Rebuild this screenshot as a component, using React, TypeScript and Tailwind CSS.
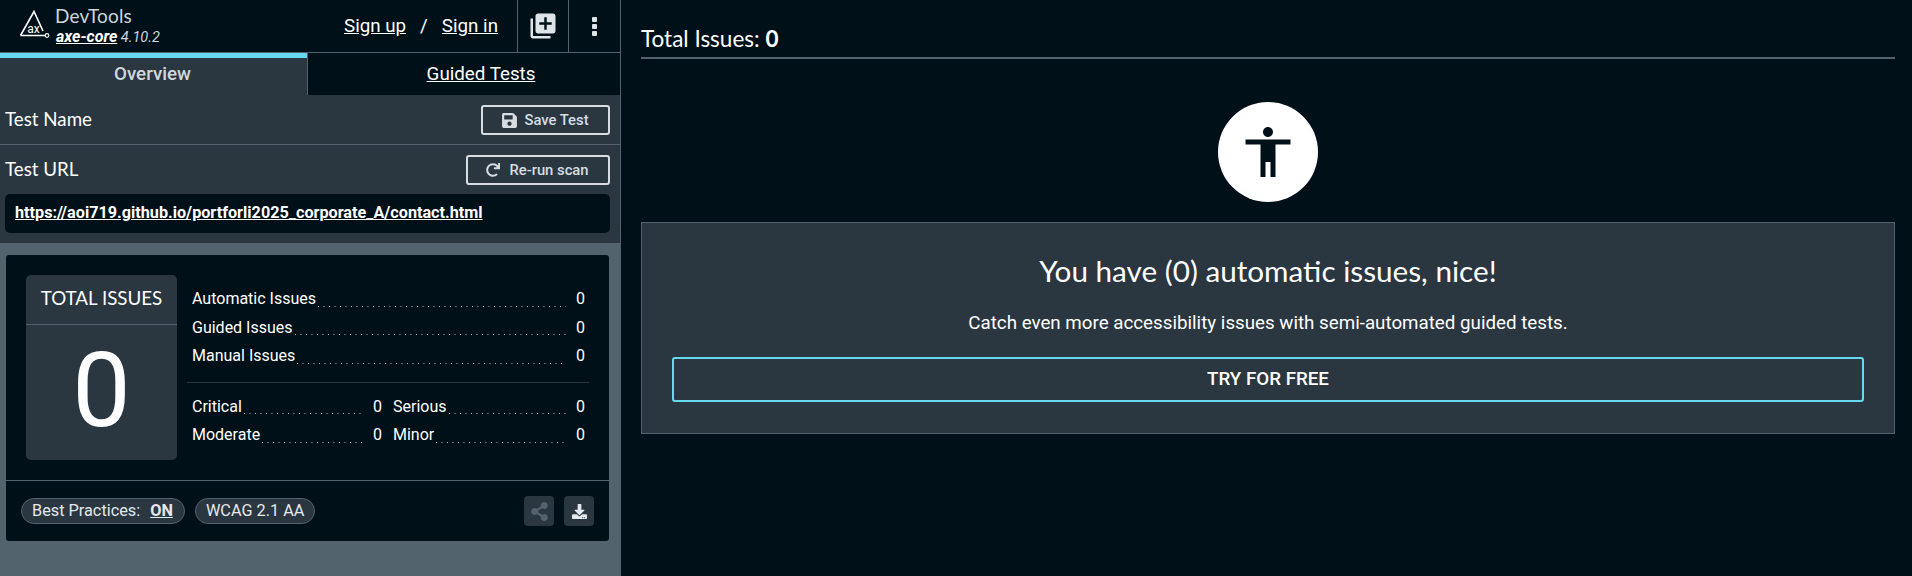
import React from 'react';
import { FaSave, FaShareAlt, FaDownload, FaRedo } from 'react-icons/fa';
import { MdLibraryAdd, MdAccessibility } from 'react-icons/md';

const AxeLogo = () => (
  <svg width="32" height="30" viewBox="0 0 32 30" className="shrink-0">
    <path d="M1.5 26.5 L15 2.5 L24 22 M1.5 26.5 H26" fill="none" stroke="#fff" strokeWidth="1.6" />
    <circle cx="28" cy="26.5" r="1.8" fill="none" stroke="#fff" strokeWidth="1.2" />
    <text x="14.5" y="23.5" textAnchor="middle" fontSize="12" fill="#fff" fontFamily="Roboto, sans-serif">ax</text>
  </svg>
);

const Dots = () => (
  <span className="flex-1 ml-[2px] mb-[7px] h-px self-end bg-[linear-gradient(to_right,#c3ccd2_1px,transparent_1px)] bg-[length:5.5px_1px] bg-repeat-x" />
);

const CountRow = ({ label, className = '' }: { label: string; className?: string }) => (
  <div className={`flex items-center h-[28.5px] ${className}`}>
    <span>{label}</span>
    <Dots />
    <span className="w-[8px] ml-[10px] shrink-0">0</span>
  </div>
);

const OutlineButton = ({ icon, label, width, gap }: { icon: React.ReactNode; label: string; width: string; gap: string }) => (
  <button className={`${width} ${gap} h-[30px] flex items-center justify-center pt-px pr-px rounded-[3px] border-2 border-[#d7dde2] text-[#d7dde2] text-[14.8px] font-medium font-['Roboto',sans-serif]`}>
    {icon}
    {label}
  </button>
);

export default function App() {
  return (
    <div className="flex w-[1912px] h-[576px] overflow-hidden bg-[#001019] text-white font-['Roboto',sans-serif]">
      <div className="w-[621px] shrink-0 flex flex-col border-r border-[#53636d] bg-[#53636d]">
        {/* top bar */}
        <div className="h-[53px] shrink-0 flex items-stretch border-b border-[#53636d] bg-[#001019]">
          <div className="flex items-start pl-[19px] pt-[9px]">
            <AxeLogo />
            <div className="ml-[4px] -mt-[5px]">
              <div className="font-['Lato',sans-serif] text-[19px] leading-[24px] text-[#cdd6dd] tracking-[0.2px]">DevTools</div>
              <div className="ml-px text-[14.5px] leading-[18px] italic text-[#cdd6dd]">
                <a className="text-[16px] font-bold text-white underline">axe-core</a> 4.10.2
              </div>
            </div>
          </div>
          <div className="flex-1 flex items-center justify-end text-[18.75px] pr-[19px]">
            <a className="underline">Sign up</a>
            <span className="mx-[14px]">/</span>
            <a className="underline">Sign in</a>
          </div>
          <div className="w-[51px] flex items-center justify-center border-l border-[#53636d]">
            <MdLibraryAdd size={30} className="text-[#dfe4e8]" />
          </div>
          <div className="w-[52px] flex flex-col items-center justify-center gap-[2px] border-l border-[#53636d]">
            <span className="w-[5px] h-[5px] rounded-[1px] bg-[#dfe4e8]" />
            <span className="w-[5px] h-[5px] rounded-[1px] bg-[#dfe4e8]" />
            <span className="w-[5px] h-[5px] rounded-[1px] bg-[#dfe4e8]" />
          </div>
        </div>
        {/* tabs */}
        <div className="h-[42px] shrink-0 flex bg-[#001019] text-[18.75px]">
          <div className="w-[307px] bg-[#2a3640] border-t-[5px] border-[#66d9ef] flex items-center justify-center pb-[5px] pr-[2px] font-medium text-[#d0d8de]">
            Overview
          </div>
          <div className="flex-1 border-l border-[#53636d] flex items-center justify-center pl-[34px]">
            <a className="underline">Guided Tests</a>
          </div>
        </div>
        {/* test info */}
        <div className="h-[148px] shrink-0 bg-[#2a3640]">
          <div className="h-[50px] flex items-center justify-between pl-[5px] pr-[10px] border-b border-[#53636d] font-['Lato',sans-serif] text-[18.75px]">
            <span>Test Name</span>
            <OutlineButton icon={<FaSave size={17} />} label="Save Test" width="w-[129px]" gap="gap-[6px]" />
          </div>
          <div className="h-[49px] flex items-center justify-between pl-[5px] pr-[10px] font-['Lato',sans-serif] text-[18.75px]">
            <span>Test URL</span>
            <OutlineButton icon={<FaRedo size={14} />} label="Re-run scan" width="w-[144px]" gap="gap-[9px]" />
          </div>
          <div className="mx-[5px] mr-[10px] h-[39px] flex items-center px-[10px] rounded-[5px] bg-[#001019] text-[16.2px] font-bold">
            <a className="underline">https://aoi719.github.io/portforli2025_corporate_A/contact.html</a>
          </div>
        </div>
        {/* summary card */}
        <div className="mt-[12px] ml-[6px] mr-[11px] h-[286px] rounded-[3px] bg-[#001019] flex flex-col">
          <div className="h-[226px] shrink-0 flex pl-[20px] pr-[20px] pt-[20px] border-b border-[#53636d]">
            <div className="w-[151px] h-[185px] shrink-0 rounded-[5px] bg-[#2a3640] flex flex-col">
              <div className="h-[50px] shrink-0 flex items-center justify-center pb-[2px] border-b border-[#53636d] font-['Lato',sans-serif] text-[18.75px]">
                TOTAL ISSUES
              </div>
              <div className="flex-1 flex items-center justify-center pb-[4px] text-[104px] font-normal leading-none">0</div>
            </div>
            <div className="flex-1 ml-[10px] text-[16px]">
              <div className="px-[5px] pt-[10px] pb-[11px] border-b border-[#2a3640]">
                <CountRow label="Automatic Issues" />
                <CountRow label="Guided Issues" />
                <CountRow label="Manual Issues" />
              </div>
              <div className="pl-[5px] pr-[5px] pt-[10px] grid grid-cols-[189px_1fr] gap-x-[12px]">
                <CountRow label="Critical" />
                <CountRow label="Serious" />
                <CountRow label="Moderate" />
                <CountRow label="Minor" />
              </div>
            </div>
          </div>
          <div className="flex-1 flex items-center pl-[15px] pr-[15px] text-[16.3px]">
            <span className="h-[26px] flex items-center pl-[10px] pr-[11px] rounded-full border border-[#53636d] bg-[#2a3640] text-[#e4e9ec]">
              Best Practices:<a className="ml-[10px] font-bold underline">ON</a>
            </span>
            <span className="ml-[10px] h-[26px] flex items-center px-[10px] rounded-full border border-[#53636d] bg-[#2a3640] text-[#e4e9ec]">
              WCAG 2.1 AA
            </span>
            <span className="ml-auto w-[30px] h-[30px] flex items-center justify-center rounded-[4px] bg-[#2a3640] text-[#53636d]">
              <FaShareAlt size={19} />
            </span>
            <span className="ml-[10px] w-[30px] h-[30px] flex items-center justify-center rounded-[4px] bg-[#2a3640] text-[#e4e9ec]">
              <FaDownload size={15} />
            </span>
          </div>
        </div>
      </div>

      {/* results */}
      <div className="flex-1 pl-[20px] pr-[17px] pt-[25px]">
        <div className="h-[34px] border-b-2 border-[#53636d] font-['Lato',sans-serif] text-[22.5px] leading-[28px]">
          Total Issues: <span className="font-bold">0</span>
        </div>
        <div className="mt-[43px] mx-auto w-[100px] h-[100px] rounded-full bg-white flex items-center justify-center text-[#001019]">
          <MdAccessibility size={60} />
        </div>
        <div className="mt-[20px] h-[212px] border border-[#53636d] bg-[#2a3640] flex flex-col items-center px-[30px]">
          <h2 className="mt-[30px] font-['Lato',sans-serif] text-[29.7px] leading-[36px]">You have (0) automatic issues, nice!</h2>
          <p className="mt-[22px] text-[18.75px] leading-[24px]">Catch even more accessibility issues with semi-automated guided tests.</p>
          <button className="mt-[22px] w-full h-[45px] rounded-[3px] border-2 border-[#66d9ef] text-[18.75px] font-medium">TRY FOR FREE</button>
        </div>
      </div>
    </div>
  );
}
